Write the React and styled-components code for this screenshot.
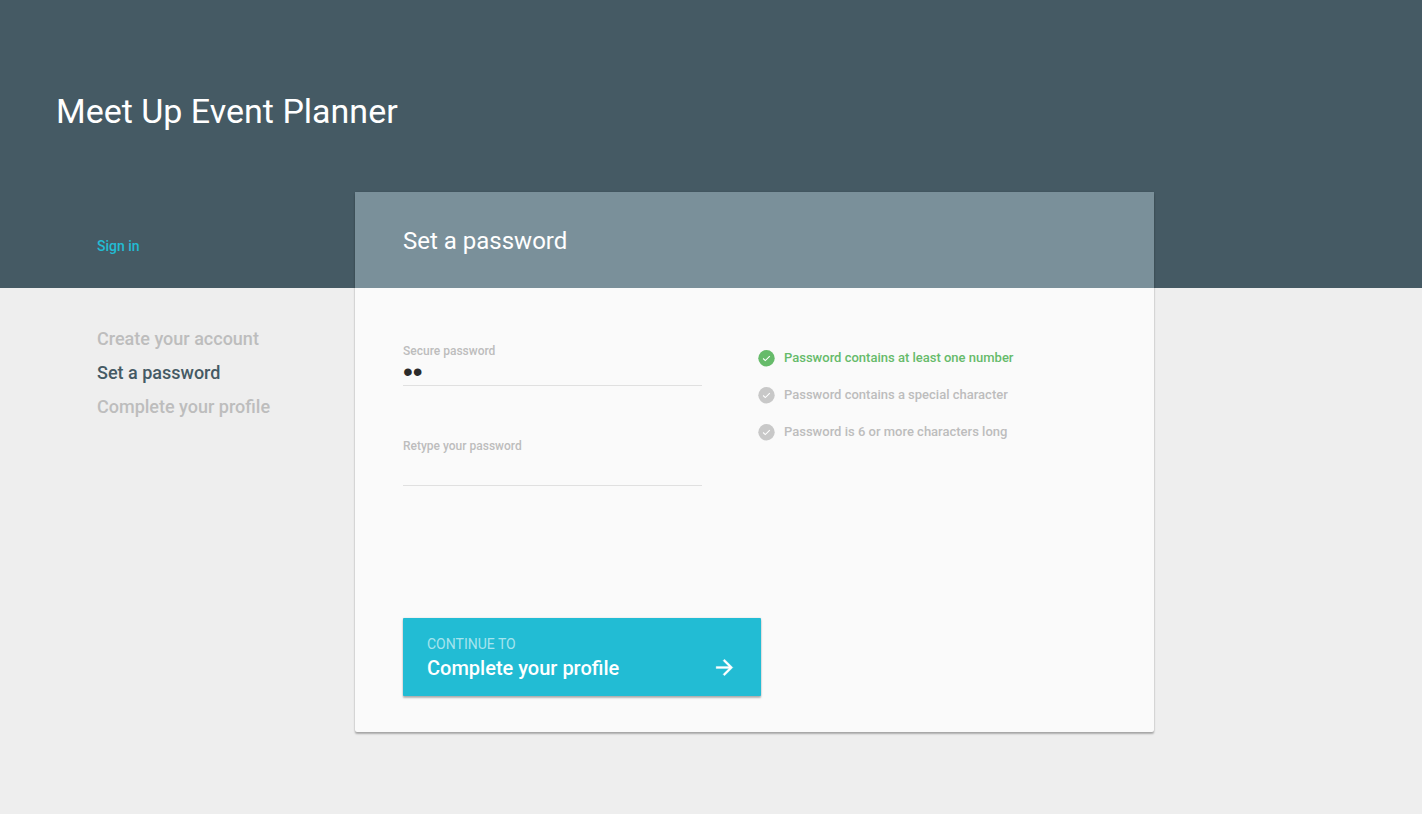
import React, { useState } from "react";
import styled, { createGlobalStyle } from "styled-components";

const GlobalStyle = createGlobalStyle`
  *, *::before, *::after { box-sizing: border-box; }
  body {
    margin: 0;
    background: #eeeeee;
    font-family: Roboto, "Liberation Sans", sans-serif;
  }
`;

const Page = styled.div`
  min-height: 100vh;
  padding-bottom: 80px;
  background: linear-gradient(#455a64 0 288px, #eeeeee 288px);
`;

const Banner = styled.header`
  height: 192px;
  padding: 87px 56px 0;
`;

const AppTitle = styled.h1`
  margin: 0;
  font-size: 34px;
  font-weight: 400;
  line-height: 48px;
  color: #ffffff;
`;

const Layout = styled.div`
  display: grid;
  grid-template-columns: 355px minmax(0, 799px);
  align-items: start;
`;

const Sidebar = styled.nav`
  padding: 44px 0 0 97px;
`;

const SignInLink = styled.a`
  display: block;
  width: max-content;
  font-size: 14px;
  font-weight: 500;
  line-height: 20px;
  color: #22bcd4;
  text-decoration: none;
`;

const Steps = styled.ol`
  margin: 66px 0 0;
  padding: 0;
  list-style: none;
`;

const Step = styled.li`
  font-size: 18px;
  font-weight: 500;
  line-height: 34px;
  color: ${({ $current }) => ($current ? "#455a64" : "#bdbdbd")};
`;

const Card = styled.main`
  background: #fafafa;
  border-radius: 2px;
  box-shadow: 0 0 2px rgba(0, 0, 0, 0.14), 0 2px 2px rgba(0, 0, 0, 0.28);
`;

const CardHeader = styled.header`
  padding: 33px 48px 31px;
  background: #7a909a;
`;

const CardTitle = styled.h2`
  margin: 0;
  font-size: 24px;
  font-weight: 400;
  line-height: 32px;
  color: #ffffff;
`;

const Form = styled.form`
  padding: 55px 48px 36px;
`;

const FormColumns = styled.div`
  display: grid;
  grid-template-columns: minmax(0, 299px) minmax(0, 1fr);
  column-gap: 56px;
`;

const Fields = styled.div`
  display: flex;
  flex-direction: column;
  gap: 52px;
`;

const Field = styled.div`
  display: flex;
  flex-direction: column;
`;

const FieldLabel = styled.label`
  font-size: 12px;
  font-weight: 500;
  line-height: 16px;
  color: #bdbdbd;
`;

const PasswordInput = styled.input`
  height: ${({ $tall }) => ($tall ? 32 : 27)}px;
  padding: 0;
  border: 0;
  border-bottom: 1px solid #e0e0e0;
  border-radius: 0;
  background: transparent;
  font-family: "Liberation Sans", sans-serif;
  font-size: 28px;
  color: #2b2b2b;
  outline: none;
`;

const Rules = styled.ul`
  display: flex;
  flex-direction: column;
  gap: 17px;
  margin: 0;
  padding: 5px 0 0;
  list-style: none;
`;

const Rule = styled.li`
  display: flex;
  align-items: center;
  gap: 9px;
  font-size: 13px;
  font-weight: 500;
  line-height: 20px;
  color: ${({ $met }) => ($met ? "#66bb6a" : "#bdbdbd")};

  svg {
    color: ${({ $met }) => ($met ? "#66bb6a" : "#c8c8c8")};
  }
`;

const ContinueButton = styled.button`
  display: flex;
  align-items: flex-end;
  justify-content: space-between;
  width: 358px;
  max-width: 100%;
  height: 78px;
  margin-top: 132px;
  padding: 16px 24px;
  border: 0;
  border-radius: 1px;
  background: #22bcd4;
  box-shadow: 0 0 2px rgba(0, 0, 0, 0.14), 0 2px 2px rgba(0, 0, 0, 0.28);
  font-family: inherit;
  text-align: left;
  color: #ffffff;
  cursor: pointer;
`;

const ButtonText = styled.span`
  display: flex;
  flex-direction: column;
  gap: 2px;
`;

const ButtonHint = styled.span`
  font-size: 14px;
  line-height: 20px;
  color: #a6e4ee;
`;

const ButtonTarget = styled.span`
  font-size: 20px;
  font-weight: 500;
  line-height: 24px;
`;

const CheckIcon = () => (
  <svg width="17" height="17" viewBox="0 0 17 17" aria-hidden="true">
    <circle cx="8.5" cy="8.3" r="8.2" fill="currentColor" />
    <path d="M5.1 8.5l2.2 2.1 4.5-4.5" fill="none" stroke="#ffffff" strokeWidth="1.1" />
  </svg>
);

const ArrowIcon = () => (
  <svg width="25" height="25" viewBox="0 0 24 24" aria-hidden="true">
    <path
      d="M12 4l-1.41 1.41L16.17 11H4v2h12.17l-5.58 5.59L12 20l8-8z"
      fill="currentColor"
      stroke="currentColor"
      strokeWidth="0.3"
    />
  </svg>
);

const STEPS = ["Create your account", "Set a password", "Complete your profile"];

const RULES = [
  { text: "Password contains at least one number", test: (v) => /\d/.test(v) },
  { text: "Password contains a special character", test: (v) => /[^a-z0-9]/i.test(v) },
  { text: "Password is 6 or more characters long", test: (v) => v.length >= 6 },
];

export default function App() {
  const [password, setPassword] = useState("a1");
  const [repeat, setRepeat] = useState("");

  return (
    <>
      <GlobalStyle />
      <Page>
        <Banner>
          <AppTitle>Meet Up Event Planner</AppTitle>
        </Banner>
        <Layout>
          <Sidebar aria-label="Sign up steps">
            <SignInLink href="#sign-in">Sign in</SignInLink>
            <Steps>
              {STEPS.map((step, i) => (
                <Step key={step} $current={i === 1}>
                  {step}
                </Step>
              ))}
            </Steps>
          </Sidebar>
          <Card>
            <CardHeader>
              <CardTitle>Set a password</CardTitle>
            </CardHeader>
            <Form onSubmit={(e) => e.preventDefault()}>
              <FormColumns>
                <Fields>
                  <Field>
                    <FieldLabel htmlFor="password">Secure password</FieldLabel>
                    <PasswordInput
                      id="password"
                      type="password"
                      value={password}
                      onChange={(e) => setPassword(e.target.value)}
                    />
                  </Field>
                  <Field>
                    <FieldLabel htmlFor="repeat">Retype your password</FieldLabel>
                    <PasswordInput
                      $tall
                      id="repeat"
                      type="password"
                      value={repeat}
                      onChange={(e) => setRepeat(e.target.value)}
                    />
                  </Field>
                </Fields>
                <Rules>
                  {RULES.map(({ text, test }) => (
                    <Rule key={text} $met={test(password)}>
                      <CheckIcon />
                      {text}
                    </Rule>
                  ))}
                </Rules>
              </FormColumns>
              <ContinueButton type="submit">
                <ButtonText>
                  <ButtonHint>CONTINUE TO</ButtonHint>
                  <ButtonTarget>Complete your profile</ButtonTarget>
                </ButtonText>
                <ArrowIcon />
              </ContinueButton>
            </Form>
          </Card>
        </Layout>
      </Page>
    </>
  );
}
